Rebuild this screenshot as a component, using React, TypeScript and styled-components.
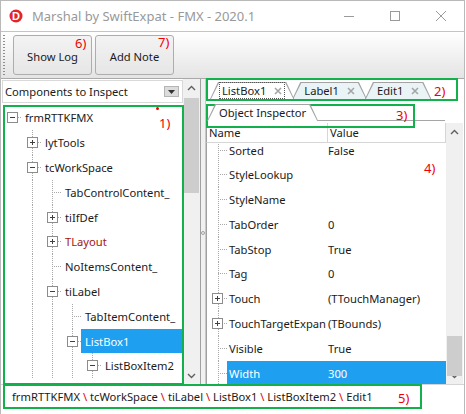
import styled, { createGlobalStyle } from 'styled-components';

const GlobalStyle = createGlobalStyle`
  html, body {
    margin: 0;
    padding: 0;
    background: #ffffff;
  }
  body {
    font-family: 'Noto Sans', 'Open Sans', sans-serif;
    font-size: 11.2px;
    color: #1a1a1a;
  }
`;

type TreeNode = {
  label: string;
  level: number;
  exp?: 'plus' | 'minus';
  red?: boolean;
  selected?: boolean;
};

const treeNodes: TreeNode[] = [
  { label: 'frmRTTKFMX', level: 0, exp: 'minus' },
  { label: 'lytTools', level: 1, exp: 'plus' },
  { label: 'tcWorkSpace', level: 1, exp: 'minus' },
  { label: 'TabControlContent_', level: 2 },
  { label: 'tiIfDef', level: 2, exp: 'plus' },
  { label: 'TLayout', level: 2, exp: 'plus', red: true },
  { label: 'NoItemsContent_', level: 2 },
  { label: 'tiLabel', level: 2, exp: 'minus' },
  { label: 'TabItemContent_', level: 3 },
  { label: 'ListBox1', level: 3, exp: 'minus', selected: true },
  { label: 'ListBoxItem2', level: 4, exp: 'minus' }
];

type PropRow = {
  name: string;
  value: string;
  exp?: boolean;
  selected?: boolean;
};

const propRows: PropRow[] = [
  { name: 'Sorted', value: 'False' },
  { name: 'StyleLookup', value: '' },
  { name: 'StyleName', value: '' },
  { name: 'TabOrder', value: '0' },
  { name: 'TabStop', value: 'True' },
  { name: 'Tag', value: '0' },
  { name: 'Touch', value: '(TTouchManager)', exp: true },
  { name: 'TouchTargetExpan', value: '(TBounds)', exp: true },
  { name: 'Visible', value: 'True' },
  { name: 'Width', value: '300', selected: true }
];

const crumbs = ['frmRTTKFMX', 'tcWorkSpace', 'tiLabel', 'ListBox1', 'ListBoxItem2', 'Edit1'];

const Expander = ({ open }: { open: boolean }) => (
  <svg width='11' height='11' viewBox='0 0 11 11'>
    <rect x='0.5' y='0.5' width='10' height='10' fill='#fff' stroke='#8c8c8c' />
    <line x1='3' y1='5.5' x2='8' y2='5.5' stroke='#404040' />
    {!open && <line x1='5.5' y1='3' x2='5.5' y2='8' stroke='#404040' />}
  </svg>
);

const Chevron = ({ up }: { up: boolean }) => (
  <svg width='9' height='6' viewBox='0 0 9 6'>
    <polyline
      points={up ? '1,5 4.5,1.5 8,5' : '1,1 4.5,4.5 8,1'}
      fill='none'
      stroke='#606060'
      strokeWidth='1.4'
    />
  </svg>
);

const CloseMark = () => (
  <svg width='8' height='8' viewBox='0 0 8 8'>
    <path d='M1 1 L7 7 M7 1 L1 7' stroke='#a5a5a5' strokeWidth='1.6' />
  </svg>
);

const ScrollBar = ({ thumbTop, thumbHeight }: { thumbTop: number; thumbHeight: number }) => (
  <Scroll>
    <ScrollArrow>
      <Chevron up />
    </ScrollArrow>
    <ScrollTrack>
      <Thumb style={{ top: thumbTop, height: thumbHeight }} />
    </ScrollTrack>
    <ScrollArrow>
      <Chevron up={false} />
    </ScrollArrow>
  </Scroll>
);

const App = () => {
  return (
    <>
      <GlobalStyle />
      <Window>
        <TitleBar>
          <svg width='14' height='14' viewBox='0 0 14 14'>
            <circle cx='7' cy='7' r='6.5' fill='#e3242b' />
            <text
              x='7'
              y='10.8'
              textAnchor='middle'
              fontSize='11'
              fontWeight='bold'
              fontFamily='Liberation Sans, sans-serif'
              fill='#fff'
            >
              D
            </text>
          </svg>
          <Title>Marshal by SwiftExpat - FMX - 2020.1</Title>
          <Controls>
            <Control>
              <svg width='10' height='10' viewBox='0 0 10 10'>
                <line x1='0' y1='5.5' x2='10' y2='5.5' stroke='#9a9a9a' />
              </svg>
            </Control>
            <Control>
              <svg width='10' height='10' viewBox='0 0 10 10'>
                <rect x='0.5' y='0.5' width='9' height='9' fill='none' stroke='#9a9a9a' />
              </svg>
            </Control>
            <Control>
              <svg width='10' height='10' viewBox='0 0 10 10'>
                <path d='M0 0 L10 10 M10 0 L0 10' stroke='#9a9a9a' />
              </svg>
            </Control>
          </Controls>
        </TitleBar>

        <Toolbar>
          <Grip />
          <ToolButton>Show Log</ToolButton>
          <ToolButton>Add Note</ToolButton>
        </Toolbar>

        <Main>
          <LeftPane>
            <LeftColumn>
              <Combo>
                <span>Components to Inspect</span>
                <DropButton>
                  <svg width='7' height='4' viewBox='0 0 7 4'>
                    <polygon points='0,0 7,0 3.5,4' fill='#333' />
                  </svg>
                </DropButton>
              </Combo>
              <Tree>
                {treeNodes.map((n) => (
                  <TreeRow key={n.label}>
                    {Array.from({ length: n.level }).map((_, i) => (
                      <Guide key={i} $show={i > 0} />
                    ))}
                    <Connector $root={n.level === 0}>
                      {n.exp && <Expander open={n.exp === 'minus'} />}
                    </Connector>
                    <TreeLabel $red={n.red} $selected={n.selected}>
                      {n.label}
                    </TreeLabel>
                  </TreeRow>
                ))}
              </Tree>
            </LeftColumn>
            <ScrollBar thumbTop={2} thumbHeight={95} />
          </LeftPane>

          <Splitter>
            <SplitDot />
          </Splitter>

          <RightPane>
            <TabStrip>
              <Tab $active $first>
                <TabFace $focus>
                  ListBox1 <CloseMark />
                </TabFace>
              </Tab>
              <Tab>
                <TabFace>
                  Label1 <CloseMark />
                </TabFace>
              </Tab>
              <Tab>
                <TabFace>
                  Edit1 <CloseMark />
                </TabFace>
              </Tab>
            </TabStrip>
            <SubStrip>
              <Tab $active $first>
                <TabFace>Object Inspector</TabFace>
              </Tab>
              <StripRest />
            </SubStrip>

            <Grid>
              <GridMain>
                <Header>
                  <HeadCell $name>Name</HeadCell>
                  <HeadCell>Value</HeadCell>
                </Header>
                <GridBody>
                  <Rows>
                    {propRows.map((r) => (
                      <PropLine key={r.name}>
                        <PropGuide>{r.exp && <Expander open={false} />}</PropGuide>
                        <PropCells $selected={r.selected}>
                          <PropName>{r.name}</PropName>
                          <PropValue>{r.value}</PropValue>
                        </PropCells>
                      </PropLine>
                    ))}
                  </Rows>
                </GridBody>
              </GridMain>
              <ScrollBar thumbTop={196} thumbHeight={40} />
            </Grid>
          </RightPane>
        </Main>

        <StatusBar>
          {crumbs.map((c, i) => (
            <span key={c}>
              {i > 0 && <Slash> \ </Slash>}
              {c}
            </span>
          ))}
        </StatusBar>

        <Note $x={2} $y={104} $w={181} $h={280} />
        <Note $x={205} $y={77} $w={252} $h={23} />
        <Note $x={205} $y={103} $w={209} $h={24} />
        <Note $x={2} $y={383} $w={419} $h={25} />

        <Mark $x={158} $y={113}>1)</Mark>
        <Mark $x={433} $y={81}>2)</Mark>
        <Mark $x={395} $y={105}>3)</Mark>
        <Mark $x={423} $y={158}>4)</Mark>
        <Mark $x={397} $y={388}>5)</Mark>
        <Mark $x={74} $y={33}>6)</Mark>
        <Mark $x={157} $y={32}>7)</Mark>
        <Dot />
      </Window>
    </>
  );
};

const Window = styled.div`
  position: relative;
  width: 465px;
  height: 414px;
  box-sizing: border-box;
  border: 1px solid #b9b9b9;
  border-bottom: none;
  background: #fff;
  display: flex;
  flex-direction: column;
  overflow: hidden;
`;

const TitleBar = styled.div`
  display: flex;
  align-items: center;
  height: 30px;
  padding-left: 8px;
  flex-shrink: 0;
`;

const Title = styled.div`
  margin-left: 9px;
  color: #999;
  font-size: 13px;
`;

const Controls = styled.div`
  display: flex;
  margin-left: auto;
  height: 100%;
`;

const Control = styled.div`
  width: 46px;
  display: flex;
  align-items: center;
  justify-content: center;
`;

const Toolbar = styled.div`
  display: flex;
  align-items: center;
  gap: 3px;
  height: 48px;
  box-sizing: border-box;
  border-top: 1px solid #c4c4c4;
  border-bottom: 1px solid #a9a9a9;
  background: linear-gradient(#ffffff, #e4e4e4);
  padding-left: 2px;
  flex-shrink: 0;
`;

const Grip = styled.div`
  width: 2px;
  height: 40px;
  margin-right: 5px;
  background-image: repeating-linear-gradient(to bottom, #8e8e8e 0 1px, transparent 1px 3px);
`;

const ToolButton = styled.div`
  width: 79px;
  height: 40px;
  box-sizing: border-box;
  border: 1px solid #adadad;
  border-radius: 3px;
  background: linear-gradient(#f3f3f3, #e6e6e6);
  display: flex;
  align-items: center;
  justify-content: center;
  padding-top: 2px;
  color: #1a1a1a;
`;

const Main = styled.div`
  display: flex;
  height: 305px;
  flex-shrink: 0;
`;

const LeftPane = styled.div`
  display: flex;
  width: 199px;
`;

const LeftColumn = styled.div`
  width: 182px;
  display: flex;
  flex-direction: column;
`;

const Combo = styled.div`
  display: flex;
  align-items: center;
  justify-content: space-between;
  height: 23px;
  margin: 1px 0 0 1px;
  box-sizing: border-box;
  border: 1px solid #d9d9d9;
  padding: 0 3px 0 2px;
`;

const DropButton = styled.div`
  width: 15px;
  height: 11px;
  box-sizing: border-box;
  background: #dcdcdc;
  border: 1px solid #b4b4b4;
  display: flex;
  align-items: center;
  justify-content: center;
`;

const Tree = styled.div`
  flex: 1;
  padding-top: 2.5px;
  overflow: hidden;
`;

const TreeRow = styled.div`
  display: flex;
  height: 24.8px;
  padding-left: 1px;
`;

const dotsV = 'repeating-linear-gradient(to bottom, #a8a8a8 0 1px, transparent 1px 2px)';
const dotsH = 'repeating-linear-gradient(to right, #a8a8a8 0 1px, transparent 1px 2px)';

const Guide = styled.span<{ $show: boolean }>`
  width: 20px;
  flex-shrink: 0;
  background-image: ${(p) => (p.$show ? dotsV : 'none')};
  background-size: 1px 100%;
  background-position: 10px 0;
  background-repeat: no-repeat;
`;

const Connector = styled.span<{ $root: boolean }>`
  width: 20px;
  flex-shrink: 0;
  display: flex;
  align-items: center;
  padding-left: 5px;
  box-sizing: border-box;
  background-image: ${(p) => (p.$root ? dotsH : `${dotsV}, ${dotsH}`)};
  background-size: ${(p) => (p.$root ? '12px 1px' : '1px 100%, 12px 1px')};
  background-position: ${(p) => (p.$root ? '10px 50%' : '10px 0, 10px 50%')};
  background-repeat: no-repeat;
`;

const TreeLabel = styled.span<{ $red?: boolean; $selected?: boolean }>`
  flex: 1;
  display: flex;
  align-items: center;
  margin-left: -1px;
  padding-left: 4px;
  white-space: nowrap;
  overflow: hidden;
  background: ${(p) => (p.$selected ? '#1e9ff0' : 'transparent')};
  color: ${(p) => (p.$selected ? '#fff' : p.$red ? '#a31515' : '#1a1a1a')};
`;

const Scroll = styled.div`
  width: 17px;
  flex-shrink: 0;
  display: flex;
  flex-direction: column;
  background: #f0f0f0;
`;

const ScrollArrow = styled.div`
  height: 17px;
  display: flex;
  align-items: center;
  justify-content: center;
`;

const ScrollTrack = styled.div`
  flex: 1;
  position: relative;
`;

const Thumb = styled.div`
  position: absolute;
  left: 1px;
  right: 1px;
  background: #cdcdcd;
`;

const Splitter = styled.div`
  width: 6px;
  flex-shrink: 0;
  box-sizing: border-box;
  border-left: 1px solid #a0a0a0;
  border-right: 1px solid #c8c8c8;
  background: #f0f0f0;
  display: flex;
  align-items: center;
  justify-content: center;
`;

const SplitDot = styled.div`
  width: 4px;
  height: 4px;
  border: 1px solid #a0a0a0;
  border-radius: 50%;
  box-sizing: border-box;
  margin-top: 3px;
`;

const RightPane = styled.div`
  flex: 1;
  display: flex;
  flex-direction: column;
  min-width: 0;
`;

const TabStrip = styled.div`
  display: flex;
  height: 21px;
  padding: 3px 0 0 4px;
  box-sizing: border-box;
`;

const SubStrip = styled.div`
  display: flex;
  height: 23px;
  padding: 4px 0 2px 1px;
  box-sizing: border-box;
`;

const StripRest = styled.div`
  width: 127px;
  border-bottom: 1px solid #a6a6a6;
`;

const Tab = styled.div<{ $active?: boolean; $first?: boolean }>`
  position: relative;
  display: flex;
  height: 17px;
  padding: 0 9px 0 9px;
  margin-left: ${(p) => (p.$first ? '0' : '-2px')};
  z-index: ${(p) => (p.$active ? 2 : 1)};

  &::before,
  &::after {
    content: '';
    position: absolute;
    clip-path: polygon(0 100%, 8px 0, calc(100% - 8px) 0, 100% 100%);
  }
  &::before {
    inset: 0;
    background: #a3a3a3;
  }
  &::after {
    inset: 1px 1px 0 1px;
    background: ${(p) => (p.$active ? '#ffffff' : '#eaf4f7')};
  }
`;

const TabFace = styled.div<{ $focus?: boolean }>`
  position: relative;
  z-index: 1;
  display: flex;
  align-items: center;
  gap: 8px;
  padding: 0 3px;
  color: #1a1a1a;
  outline: ${(p) => (p.$focus ? '1px dotted #555' : 'none')};
  outline-offset: -1px;
`;

const Grid = styled.div`
  flex: 1;
  display: flex;
  min-height: 0;
  margin-right: 1px;
`;

const GridMain = styled.div`
  flex: 1;
  display: flex;
  flex-direction: column;
  min-width: 0;
`;

const Header = styled.div`
  display: flex;
  height: 20px;
  flex-shrink: 0;
  box-sizing: border-box;
  border-bottom: 1px solid #d6d6d6;
  border-left: 1px solid #a0a0a0;
`;

const HeadCell = styled.div<{ $name?: boolean }>`
  display: flex;
  align-items: center;
  padding-left: 2px;
  width: ${(p) => (p.$name ? '118px' : 'auto')};
  flex: ${(p) => (p.$name ? 'none' : '1')};
  border-right: 1px solid #d6d6d6;
`;

const GridBody = styled.div`
  flex: 1;
  overflow: hidden;
  border-left: 1px solid #a0a0a0;
`;

const Rows = styled.div`
  margin-top: -5.4px;
`;

const PropLine = styled.div`
  display: flex;
  height: 24.8px;
`;

const PropGuide = styled.div`
  width: 20px;
  flex-shrink: 0;
  display: flex;
  align-items: center;
  padding-left: 5px;
  box-sizing: border-box;
  background-image: ${dotsV}, ${dotsH};
  background-size: 1px 100%, 10px 1px;
  background-position: 11px 0, 11px 50%;
  background-repeat: no-repeat;
`;

const PropCells = styled.div<{ $selected?: boolean }>`
  flex: 1;
  display: flex;
  align-items: center;
  background: ${(p) => (p.$selected ? '#1e9ff0' : 'transparent')};
  color: ${(p) => (p.$selected ? '#fff' : '#1a1a1a')};
`;

const PropName = styled.div`
  width: 100px;
  padding-left: 2px;
  box-sizing: border-box;
  white-space: nowrap;
  overflow: hidden;
`;

const PropValue = styled.div`
  padding-left: 1px;
  white-space: nowrap;
`;

const StatusBar = styled.div`
  display: flex;
  align-items: center;
  height: 24px;
  flex-shrink: 0;
  padding-left: 11px;
  border-top: 1px solid #d4d4d4;
  box-sizing: border-box;
  white-space: pre;
`;

const Slash = styled.span`
  color: #e00000;
`;

const Note = styled.div<{ $x: number; $y: number; $w: number; $h: number }>`
  position: absolute;
  left: ${(p) => p.$x}px;
  top: ${(p) => p.$y}px;
  width: ${(p) => p.$w}px;
  height: ${(p) => p.$h}px;
  box-sizing: border-box;
  border: 2px solid #13b14c;
  pointer-events: none;
`;

const Mark = styled.div<{ $x: number; $y: number }>`
  position: absolute;
  left: ${(p) => p.$x}px;
  top: ${(p) => p.$y}px;
  color: #f00000;
  font-size: 13px;
  line-height: 18px;
`;

const Dot = styled.div`
  position: absolute;
  left: 155px;
  top: 106px;
  width: 3px;
  height: 3px;
  border-radius: 50%;
  background: #f00000;
`;

export default App;
